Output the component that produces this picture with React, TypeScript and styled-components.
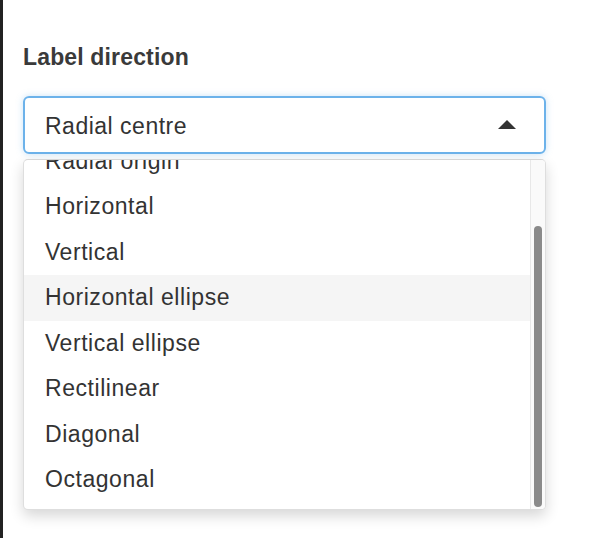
import React, {useLayoutEffect, useRef} from 'react';
import styled, {createGlobalStyle} from 'styled-components';

const GlobalStyle = createGlobalStyle`
  html, body {
    margin: 0;
    padding: 0;
    background: #fff;
  }
  body {
    font-family: "Liberation Sans", Arial, Helvetica, sans-serif;
    color: #333;
  }
`;

const Page = styled.div`
  box-sizing: border-box;
  width: 606px;
  height: 538px;
  border-left: 3px solid #222;
  padding: 43px 0 0 20px;
  overflow: hidden;
`;

const Field = styled.div`
  width: 523px;
  display: flex;
  flex-direction: column;
`;

const Label = styled.div`
  font-size: 23px;
  line-height: 28px;
  font-weight: 700;
  letter-spacing: 0.15px;
  color: #3a3a3a;
  margin-bottom: 25px;
`;

const SelectBox = styled.div`
  box-sizing: border-box;
  height: 57.5px;
  border: 2px solid #6cb2ea;
  border-radius: 6px;
  box-shadow: 0 0 7px rgba(102, 175, 233, 0.35);
  display: flex;
  align-items: center;
  justify-content: space-between;
  padding: 3px 28px 0 20px;
  font-size: 23px;
  letter-spacing: 0.5px;
  color: #333;
`;

const Caret = styled.span`
  width: 0;
  height: 0;
  border-left: 9px solid transparent;
  border-right: 9px solid transparent;
  border-bottom: 9px solid #333;
  margin-top: -4px;
`;

const Menu = styled.div`
  box-sizing: border-box;
  margin-top: 5.5px;
  height: 351px;
  border: 1px solid rgba(0, 0, 0, 0.13);
  border-top-color: rgba(0, 0, 0, 0.16);
  border-radius: 5px;
  box-shadow: 0 6px 14px rgba(0, 0, 0, 0.16);
  background: #fff;
  display: flex;
  overflow: hidden;
`;

const List = styled.div`
  flex: 1;
  overflow: hidden;
  padding: 6px 0;
`;

const ScrollTrack = styled.div`
  box-sizing: border-box;
  width: 15px;
  flex-shrink: 0;
  background: #fafafa;
  border-left: 1px solid #e8e8e8;
  display: flex;
  flex-direction: column;
  justify-content: flex-end;
  padding: 0 3px 2px 3px;
`;

const ScrollThumb = styled.div`
  height: 281px;
  border-radius: 4px;
  background: #8a8a8a;
`;

const Option = styled.div<{ $active?: boolean }>`
  height: 45.5px;
  display: flex;
  align-items: center;
  padding-left: 21px;
  font-size: 23px;
  letter-spacing: 0.55px;
  color: #333;
  white-space: nowrap;
  background: ${p => (p.$active ? '#f5f5f5' : 'transparent')};
`;

const options = [
  'Radial centre',
  'Radial origin',
  'Horizontal',
  'Vertical',
  'Horizontal ellipse',
  'Vertical ellipse',
  'Rectilinear',
  'Diagonal',
  'Octagonal',
];

export default function App() {
  const listRef = useRef<HTMLDivElement>(null);

  useLayoutEffect(() => {
    // list is scrolled all the way down in the screenshot
    if (listRef.current) {
      listRef.current.scrollTop = listRef.current.scrollHeight;
    }
  }, []);

  return (
    <Page>
      <GlobalStyle/>
      <Field>
        <Label>Label direction</Label>
        <SelectBox>
          <span>Radial centre</span>
          <Caret/>
        </SelectBox>
        <Menu>
          <List ref={listRef}>
            {options.map(o =>
              <Option key={o} $active={o === 'Horizontal ellipse'}>{o}</Option>
            )}
          </List>
          <ScrollTrack>
            <ScrollThumb/>
          </ScrollTrack>
        </Menu>
      </Field>
    </Page>
  );
}
